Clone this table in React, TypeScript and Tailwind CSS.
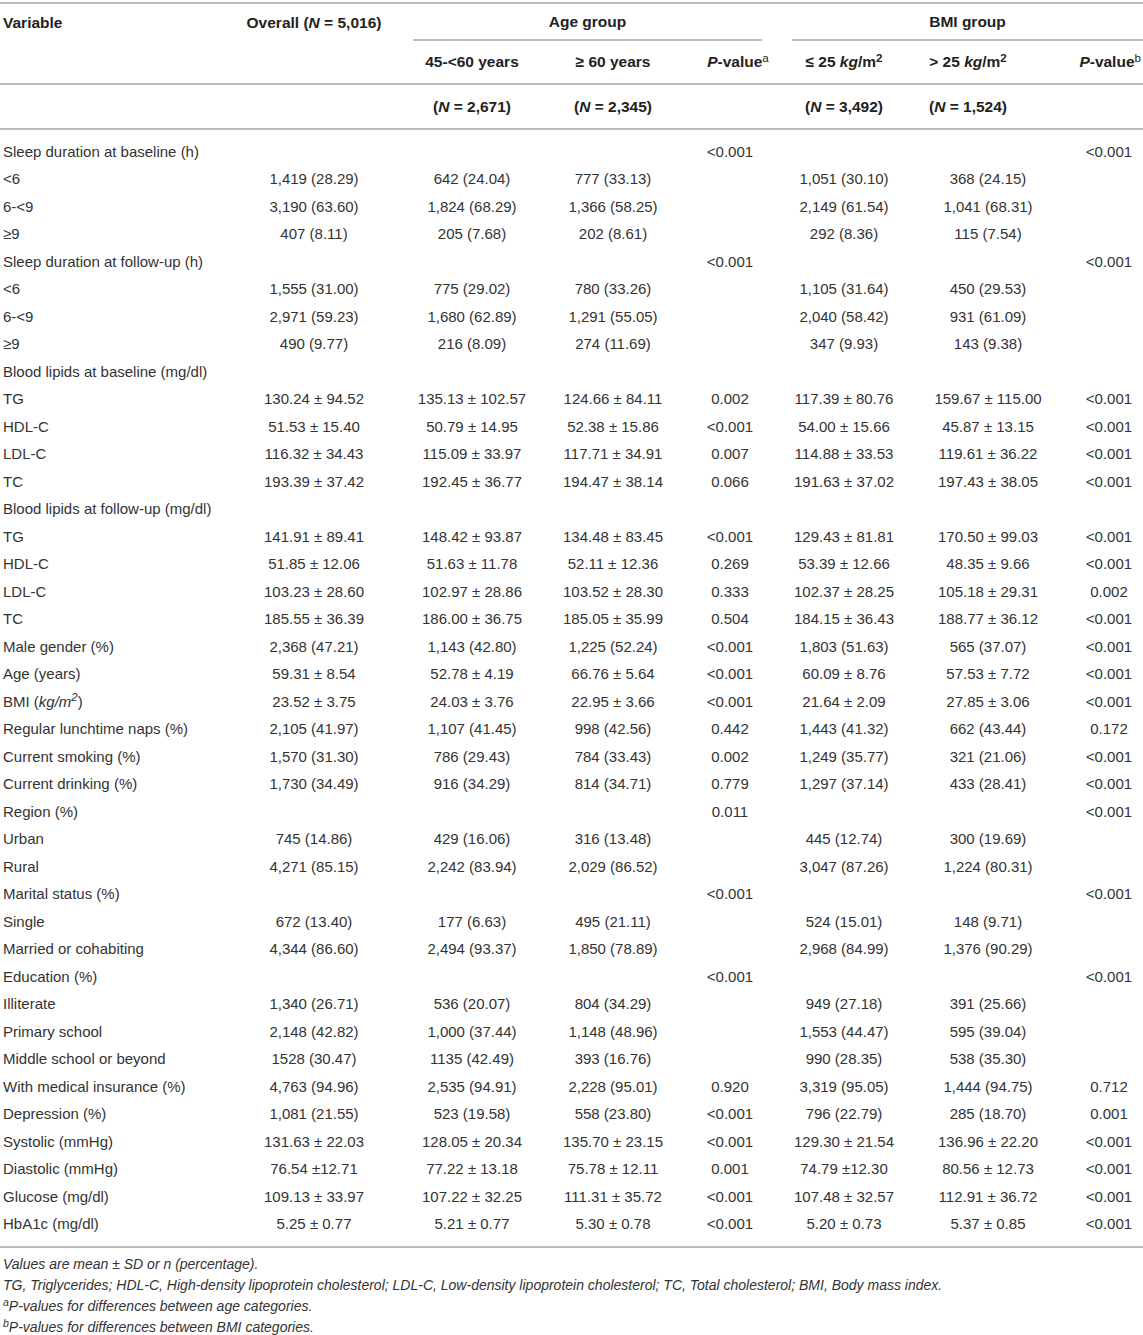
import type { ReactNode } from "react";

type Row = {
  label: ReactNode;
  cells: string[];
};

const font = { fontFamily: '"Liberation Sans", Arial, sans-serif' };

const bmiLabel = (
  <>
    BMI (<i>kg/m</i>
    <sup className="italic">2</sup>)
  </>
);

const rows: Row[] = [
  { label: "Sleep duration at baseline (h)", cells: ["", "", "", "<0.001", "", "", "<0.001"] },
  { label: "<6", cells: ["1,419 (28.29)", "642 (24.04)", "777 (33.13)", "", "1,051 (30.10)", "368 (24.15)", ""] },
  { label: "6-<9", cells: ["3,190 (63.60)", "1,824 (68.29)", "1,366 (58.25)", "", "2,149 (61.54)", "1,041 (68.31)", ""] },
  { label: "≥9", cells: ["407 (8.11)", "205 (7.68)", "202 (8.61)", "", "292 (8.36)", "115 (7.54)", ""] },
  { label: "Sleep duration at follow-up (h)", cells: ["", "", "", "<0.001", "", "", "<0.001"] },
  { label: "<6", cells: ["1,555 (31.00)", "775 (29.02)", "780 (33.26)", "", "1,105 (31.64)", "450 (29.53)", ""] },
  { label: "6-<9", cells: ["2,971 (59.23)", "1,680 (62.89)", "1,291 (55.05)", "", "2,040 (58.42)", "931 (61.09)", ""] },
  { label: "≥9", cells: ["490 (9.77)", "216 (8.09)", "274 (11.69)", "", "347 (9.93)", "143 (9.38)", ""] },
  { label: "Blood lipids at baseline (mg/dl)", cells: ["", "", "", "", "", "", ""] },
  { label: "TG", cells: ["130.24 ± 94.52", "135.13 ± 102.57", "124.66 ± 84.11", "0.002", "117.39 ± 80.76", "159.67 ± 115.00", "<0.001"] },
  { label: "HDL-C", cells: ["51.53 ± 15.40", "50.79 ± 14.95", "52.38 ± 15.86", "<0.001", "54.00 ± 15.66", "45.87 ± 13.15", "<0.001"] },
  { label: "LDL-C", cells: ["116.32 ± 34.43", "115.09 ± 33.97", "117.71 ± 34.91", "0.007", "114.88 ± 33.53", "119.61 ± 36.22", "<0.001"] },
  { label: "TC", cells: ["193.39 ± 37.42", "192.45 ± 36.77", "194.47 ± 38.14", "0.066", "191.63 ± 37.02", "197.43 ± 38.05", "<0.001"] },
  { label: "Blood lipids at follow-up (mg/dl)", cells: ["", "", "", "", "", "", ""] },
  { label: "TG", cells: ["141.91 ± 89.41", "148.42 ± 93.87", "134.48 ± 83.45", "<0.001", "129.43 ± 81.81", "170.50 ± 99.03", "<0.001"] },
  { label: "HDL-C", cells: ["51.85 ± 12.06", "51.63 ± 11.78", "52.11 ± 12.36", "0.269", "53.39 ± 12.66", "48.35 ± 9.66", "<0.001"] },
  { label: "LDL-C", cells: ["103.23 ± 28.60", "102.97 ± 28.86", "103.52 ± 28.30", "0.333", "102.37 ± 28.25", "105.18 ± 29.31", "0.002"] },
  { label: "TC", cells: ["185.55 ± 36.39", "186.00 ± 36.75", "185.05 ± 35.99", "0.504", "184.15 ± 36.43", "188.77 ± 36.12", "<0.001"] },
  { label: "Male gender (%)", cells: ["2,368 (47.21)", "1,143 (42.80)", "1,225 (52.24)", "<0.001", "1,803 (51.63)", "565 (37.07)", "<0.001"] },
  { label: "Age (years)", cells: ["59.31 ± 8.54", "52.78 ± 4.19", "66.76 ± 5.64", "<0.001", "60.09 ± 8.76", "57.53 ± 7.72", "<0.001"] },
  { label: bmiLabel, cells: ["23.52 ± 3.75", "24.03 ± 3.76", "22.95 ± 3.66", "<0.001", "21.64 ± 2.09", "27.85 ± 3.06", "<0.001"] },
  { label: "Regular lunchtime naps (%)", cells: ["2,105 (41.97)", "1,107 (41.45)", "998 (42.56)", "0.442", "1,443 (41.32)", "662 (43.44)", "0.172"] },
  { label: "Current smoking (%)", cells: ["1,570 (31.30)", "786 (29.43)", "784 (33.43)", "0.002", "1,249 (35.77)", "321 (21.06)", "<0.001"] },
  { label: "Current drinking (%)", cells: ["1,730 (34.49)", "916 (34.29)", "814 (34.71)", "0.779", "1,297 (37.14)", "433 (28.41)", "<0.001"] },
  { label: "Region (%)", cells: ["", "", "", "0.011", "", "", "<0.001"] },
  { label: "Urban", cells: ["745 (14.86)", "429 (16.06)", "316 (13.48)", "", "445 (12.74)", "300 (19.69)", ""] },
  { label: "Rural", cells: ["4,271 (85.15)", "2,242 (83.94)", "2,029 (86.52)", "", "3,047 (87.26)", "1,224 (80.31)", ""] },
  { label: "Marital status (%)", cells: ["", "", "", "<0.001", "", "", "<0.001"] },
  { label: "Single", cells: ["672 (13.40)", "177 (6.63)", "495 (21.11)", "", "524 (15.01)", "148 (9.71)", ""] },
  { label: "Married or cohabiting", cells: ["4,344 (86.60)", "2,494 (93.37)", "1,850 (78.89)", "", "2,968 (84.99)", "1,376 (90.29)", ""] },
  { label: "Education (%)", cells: ["", "", "", "<0.001", "", "", "<0.001"] },
  { label: "Illiterate", cells: ["1,340 (26.71)", "536 (20.07)", "804 (34.29)", "", "949 (27.18)", "391 (25.66)", ""] },
  { label: "Primary school", cells: ["2,148 (42.82)", "1,000 (37.44)", "1,148 (48.96)", "", "1,553 (44.47)", "595 (39.04)", ""] },
  { label: "Middle school or beyond", cells: ["1528 (30.47)", "1135 (42.49)", "393 (16.76)", "", "990 (28.35)", "538 (35.30)", ""] },
  { label: "With medical insurance (%)", cells: ["4,763 (94.96)", "2,535 (94.91)", "2,228 (95.01)", "0.920", "3,319 (95.05)", "1,444 (94.75)", "0.712"] },
  { label: "Depression (%)", cells: ["1,081 (21.55)", "523 (19.58)", "558 (23.80)", "<0.001", "796 (22.79)", "285 (18.70)", "0.001"] },
  { label: "Systolic (mmHg)", cells: ["131.63 ± 22.03", "128.05 ± 20.34", "135.70 ± 23.15", "<0.001", "129.30 ± 21.54", "136.96 ± 22.20", "<0.001"] },
  { label: "Diastolic (mmHg)", cells: ["76.54 ±12.71", "77.22 ± 13.18", "75.78 ± 12.11", "0.001", "74.79 ±12.30", "80.56 ± 12.73", "<0.001"] },
  { label: "Glucose (mg/dl)", cells: ["109.13 ± 33.97", "107.22 ± 32.25", "111.31 ± 35.72", "<0.001", "107.48 ± 32.57", "112.91 ± 36.72", "<0.001"] },
  { label: "HbA1c (mg/dl)", cells: ["5.25 ± 0.77", "5.21 ± 0.77", "5.30 ± 0.78", "<0.001", "5.20 ± 0.73", "5.37 ± 0.85", "<0.001"] },
];

const cols = "grid grid-cols-[225px_178px_138px_144px_90px_138px_150px_80px]";

function Line() {
  return <div className="h-[2px] bg-[#bdbdbd]" />;
}

export default function App() {
  return (
    <div className="w-[1143px] bg-white text-[15px] text-[#333]" style={font}>
      <div className="pt-[2px]">
        <Line />
      </div>

      {/* header row 1 */}
      <div className={`${cols} h-[37px] text-[15.5px] font-bold text-[#222]`}>
        <div className="flex items-center pl-[3px]">Variable</div>
        <div className="flex items-center justify-center">
          Overall (<i>N</i>&nbsp;=&nbsp;5,016)
        </div>
        <div className="col-span-3 ml-[10px] mr-[13px] flex items-center justify-center border-b-2 border-[#bdbdbd]">
          Age group
        </div>
        <div className="col-span-3 ml-[17px] flex items-center justify-center border-b-2 border-[#bdbdbd]">
          BMI group
        </div>
      </div>

      {/* header row 2 */}
      <div className={`${cols} h-[42px] items-center text-[15.5px] font-bold text-[#222]`}>
        <div />
        <div />
        <div className="text-center">45-&lt;60 years</div>
        <div className="text-center">≥ 60 years</div>
        <div className="pl-[16px] text-center">
          <i>P</i>-value<sup className="font-normal">a</sup>
        </div>
        <div className="text-center">
          ≤ 25 <i>kg</i>/m<sup>2</sup>
        </div>
        <div className="pr-[40px] text-center">
          &gt; 25 <i>kg</i>/m<sup>2</sup>
        </div>
        <div className="pr-[2px] text-right">
          <i>P</i>-value<sup className="font-normal">b</sup>
        </div>
      </div>
      <Line />

      {/* header row 3 */}
      <div className={`${cols} h-[43px] items-center text-[15.5px] font-bold text-[#222]`}>
        <div />
        <div />
        <div className="text-center">
          (<i>N</i> = 2,671)
        </div>
        <div className="text-center">
          (<i>N</i> = 2,345)
        </div>
        <div />
        <div className="text-center">
          (<i>N</i> = 3,492)
        </div>
        <div className="pr-[40px] text-center">
          (<i>N</i> = 1,524)
        </div>
        <div />
      </div>
      <Line />

      {/* body */}
      <div className="py-[8px]">
        {rows.map((row, i) => (
          <div key={i} className={`${cols} h-[27.5px] items-center`}>
            <div className="whitespace-nowrap pl-[3px]">{row.label}</div>
            {row.cells.map((c, j) => (
              <div
                key={j}
                className={j === 6 ? "whitespace-nowrap pl-[12px] text-center" : "whitespace-nowrap text-center"}
              >
                {c}
              </div>
            ))}
          </div>
        ))}
      </div>
      <Line />

      {/* notes */}
      <div className="pl-[3px] pt-[6px] text-[14px] italic leading-[21px]">
        <p>Values are mean ± SD or n (percentage).</p>
        <p>
          TG, Triglycerides; HDL-C, High-density lipoprotein cholesterol; LDL-C, Low-density lipoprotein
          cholesterol; TC, Total cholesterol; BMI, Body mass index.
        </p>
        <p>
          <sup>a</sup>P-values for differences between age categories.
        </p>
        <p>
          <sup>b</sup>P-values for differences between BMI categories.
        </p>
      </div>
    </div>
  );
}
